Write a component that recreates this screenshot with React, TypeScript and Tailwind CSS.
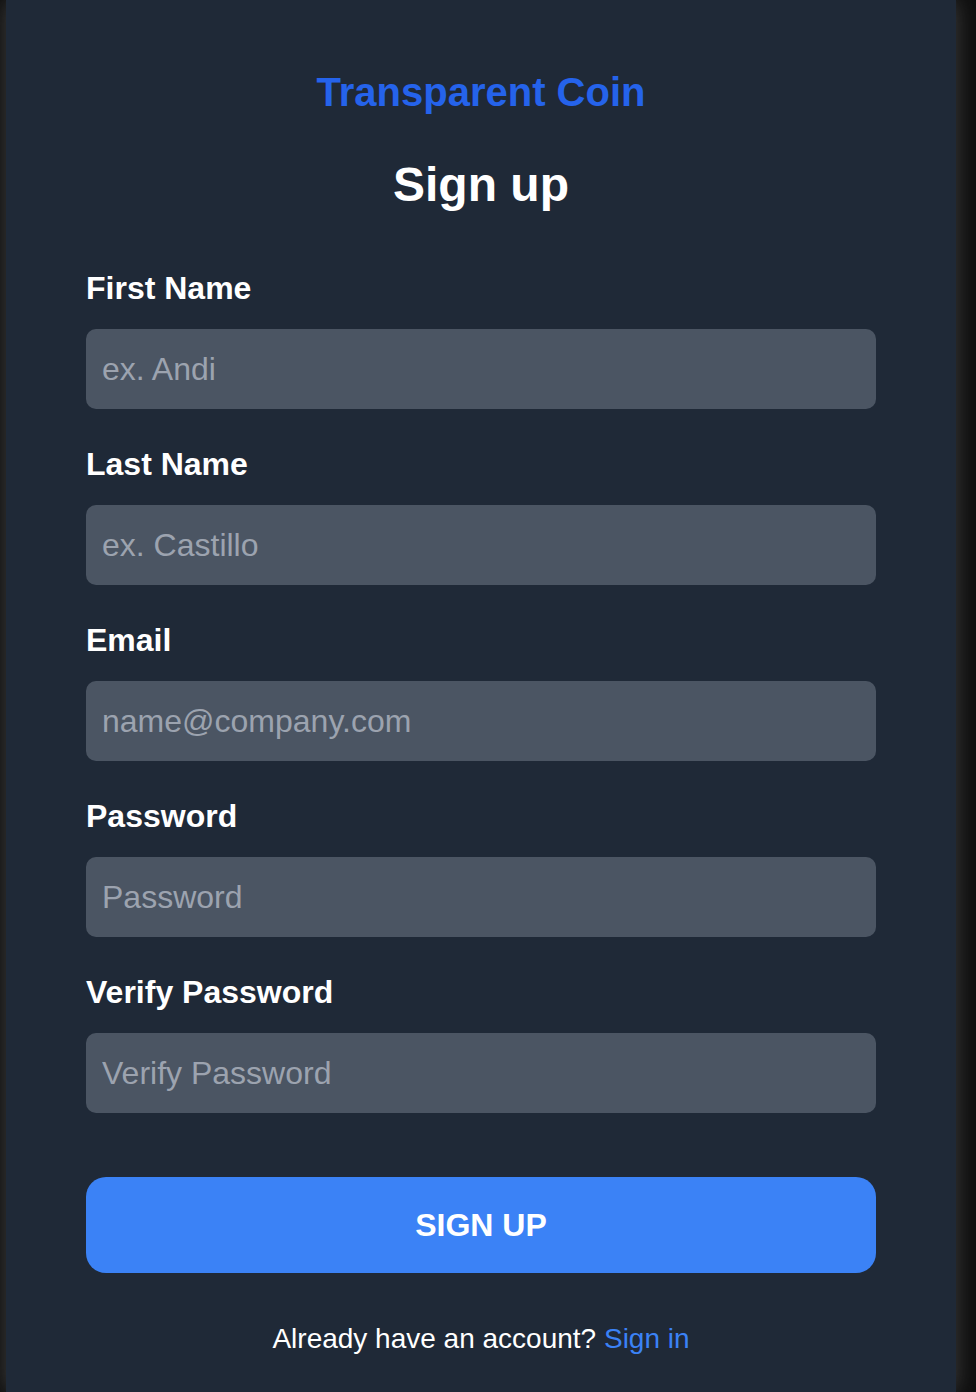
import React from "react";

const fields = [
  { label: "First Name", placeholder: "ex. Andi", type: "text" },
  { label: "Last Name", placeholder: "ex. Castillo", type: "text" },
  { label: "Email", placeholder: "name@company.com", type: "email" },
  { label: "Password", placeholder: "Password", type: "password" },
  { label: "Verify Password", placeholder: "Verify Password", type: "password" },
];

export default function App() {
  return (
    <div
      className="min-h-[1392px] w-full bg-[#0e0e0e] flex overflow-hidden"
      style={{ fontFamily: '"Liberation Sans", Arial, Helvetica, sans-serif' }}
    >
      <div className="ml-[6px] w-[950px] min-h-[1392px] bg-[#1f2937] shadow-[0_0_22px_rgba(70,70,70,0.9)] px-[80px] pt-[65px]">
        <div className="text-center text-[40px] leading-[55px] font-bold text-[#2563eb]">
          Transparent Coin
        </div>
        <h1 className="mt-[33px] text-center text-[48px] leading-[63px] font-bold text-white">
          Sign up
        </h1>
        <form className="mt-[49px] flex flex-col gap-[32px]" onSubmit={(e) => e.preventDefault()}>
          {fields.map((f) => (
            <div key={f.label} className="flex flex-col">
              <label className="text-[32px] leading-[47px] font-bold text-white mb-[17px]">
                {f.label}
              </label>
              <input
                type={f.type}
                placeholder={f.placeholder}
                className="h-[80px] w-full rounded-[10px] bg-[#4b5563] px-[16px] text-[32px] text-white placeholder:text-[#9ca3af] outline-none"
              />
            </div>
          ))}
          <button
            type="submit"
            className="mt-[32px] h-[96px] w-full rounded-[20px] bg-[#3b82f6] text-[32px] font-bold uppercase text-white"
          >
            Sign up
          </button>
        </form>
        <p className="mt-[46px] text-center text-[28px] leading-[40px] text-white">
          Already have an account? <a className="text-[#3b82f6]">Sign in</a>
        </p>
      </div>
    </div>
  );
}
